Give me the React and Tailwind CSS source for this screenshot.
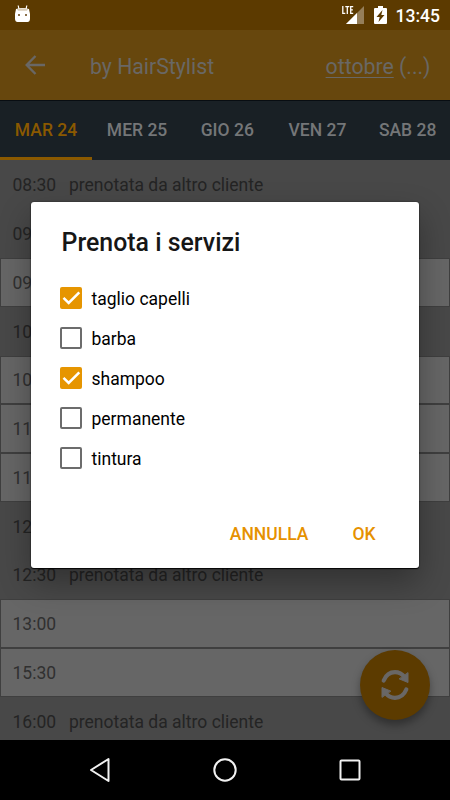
const days = ['MAR 24', 'MER 25', 'GIO 26', 'VEN 27', 'SAB 28'];

const slots = [
  { time: '08:30', taken: true },
  { time: '09:00', taken: true },
  { time: '09:30', taken: false },
  { time: '10:00', taken: true },
  { time: '10:30', taken: false },
  { time: '11:00', taken: false },
  { time: '11:30', taken: false },
  { time: '12:00', taken: true },
  { time: '12:30', taken: true },
  { time: '13:00', taken: false },
  { time: '15:30', taken: false },
  { time: '16:00', taken: true },
];

const services = [
  { name: 'taglio capelli', checked: true },
  { name: 'barba', checked: false },
  { name: 'shampoo', checked: true },
  { name: 'permanente', checked: false },
  { name: 'tintura', checked: false },
];

function StatusBar() {
  return (
    <div className="flex h-[30px] shrink-0 items-center bg-[#5c3a00] pl-[14px] pr-[10px] text-white">
      <svg width="17" height="20" viewBox="0 0 17 20" fill="currentColor">
        <path d="M4.200 .5l.8 4M12.800 .5l-.8 4" stroke="currentColor" strokeWidth="1.200" />
        <path d="M2 4Q8.500 2 15 4L16 9v5q-.2 3-2.500 3h-10Q1.200 17 1 14V9z" />
        <path d="M3 4Q8.500 2.800 14 4L13 5.800H4z" fill="#d8cdb8" />
        <path d="M4 9h2v2H4zM11 9h2v2h-2z" fill="#8b704b" />
      </svg>
      <div className="ml-auto flex items-center">
        <svg width="24" height="20" viewBox="0 0 24 20" fill="currentColor">
          <path d="M23 1v18H5z" opacity=".35" />
          <path d="M16 8v11H5z" />
          <path d="M1.800 1v7.400H4.300M4.300 1.600h4M6.300 1.600V9M12.200 1.600H9.700V8.400h2.500M9.700 4.900h2.200" fill="none" stroke="currentColor" strokeWidth="1.300" />
        </svg>
        <svg className="ml-[9px]" width="13" height="20" viewBox="0 0 13 20">
          <path d="M4 1h5v2h3q1 0 1 1v14q0 1-1 1H1q-1 0-1-1V4q0-1 1-1h3z" fill="currentColor" />
          <path d="M8.500 5L2.500 12h3.200l-1.200 5 6-7H7.300z" fill="#5c3a00" />
        </svg>
        <span className="ml-[9px] pt-px text-[17.5px] font-medium leading-[30px]">13:45</span>
      </div>
    </div>
  );
}

function Header() {
  return (
    <header className="flex h-[70px] shrink-0 items-center bg-[#67470d] pl-[25px] pr-[19.5px] pt-[3px] text-[21.25px] text-[#696765]">
      <svg className="-mt-[3px]" width="21" height="20" viewBox="0 0 21 20" fill="none" stroke="currentColor" strokeWidth="2.400">
        <path d="M20 10H2M10.500 1L1.700 10l8.800 9" />
      </svg>
      <span className="ml-[44px]">by HairStylist</span>
      <span className="ml-auto whitespace-pre">
        <span className="underline decoration-1 underline-offset-[3px] [text-decoration-skip-ink:none]">ottobre</span> (...)
      </span>
    </header>
  );
}

function DayTabs() {
  return (
    <nav className="flex h-[60px] shrink-0 overflow-hidden border-t border-[#080d12] bg-[#192025] text-[17.5px] font-medium text-[#747678]">
      {days.map((day, i) => (
        <div
          key={day}
          className={`flex shrink-0 items-center justify-center whitespace-nowrap border-b-[3px] pt-[2px] ${
            i === 0 ? 'w-[92px] border-[#8a5900] text-[#8a5900]' : 'w-[90.2px] border-transparent'
          }`}
        >
          {day}
        </div>
      ))}
    </nav>
  );
}

function Slot({ time, taken }) {
  return (
    <div
      className={`flex h-[48.75px] shrink-0 items-center border pl-[11.5px] pt-px text-[17.5px] ${
        taken ? 'border-transparent text-[#242424]' : 'border-[#3f3f3f] bg-[#666666] text-[#303030]'
      }`}
    >
      <span className="w-[56.5px]">{time}</span>
      {taken && <span>prenotata da altro cliente</span>}
    </div>
  );
}

function ServiceDialog() {
  return (
    <div className="absolute left-[31px] top-[201.5px] flex h-[366.5px] w-[387.5px] flex-col rounded-[3px] bg-white px-[30.5px] pt-[24.5px] text-black shadow-[0_1px_1px_rgba(0,0,0,0.9),0_0_2px_rgba(0,0,0,0.5),0_14px_32px_rgba(0,0,0,0.32)]">
      <h1 className="text-[24.9px] font-medium leading-[34px] text-[#161616]">Prenota i servizi</h1>
      <div className="-ml-[1.5px] mt-[18px]">
        {services.map(({ name, checked }) => (
          <div key={name} className="flex h-[40px] items-center text-[17.5px]">
            {checked ? (
              <span className="size-[22px] rounded-[2px] bg-[#e69500] text-white">
                <svg width="22" height="22" viewBox="0 0 22 22" fill="none" stroke="currentColor" strokeWidth="2.500">
                  <path d="M3.500 10.800l5.200 5.200L19.300 5.300" />
                </svg>
              </span>
            ) : (
              <span className="size-[22px] rounded-[2px] border-2 border-[#6c6c6c]" />
            )}
            <span className="ml-[9.500px] pt-[2px]">{name}</span>
          </div>
        ))}
      </div>
      <div className="mt-[42px] flex justify-end gap-[44px] pr-[12.5px] text-[17.5px] font-medium leading-[28px] text-[#e69100]">
        <button>ANNULLA</button>
        <button>OK</button>
      </div>
    </div>
  );
}

function RefreshButton() {
  return (
    <div className="absolute left-[360px] top-[650px] flex size-[70px] items-center justify-center rounded-full bg-[#5c3b00] text-[#696765] shadow-[0_5px_9px_rgba(0,0,0,0.35)]">
      <svg width="30" height="32" viewBox="0 0 30 32" fill="none" stroke="currentColor" strokeWidth="4.200" strokeLinecap="round">
        <path d="M3.700 11.500C6 6 10 3.200 15 3.200c4 0 7 1.600 9.500 4.800" />
        <path d="M26.300 20.500C24 26 20 28.800 15 28.800c-4 0-7-1.600-9.500-4.800" />
        <path d="M28 4v9.500L19.500 10zM2 28v-9.500L10.500 22z" fill="currentColor" strokeWidth="1" strokeLinejoin="round" />
      </svg>
    </div>
  );
}

function NavBar() {
  return (
    <div className="flex h-[60px] shrink-0 items-center justify-center gap-[100px] bg-black pr-px text-[#f2f2f2]">
      <svg width="25" height="26" viewBox="0 0 25 26" fill="none" stroke="currentColor" strokeWidth="2" strokeLinejoin="round">
        <path d="M21.500 2v22L4 13z" />
      </svg>
      <svg width="25" height="26" viewBox="0 0 25 26" fill="none" stroke="currentColor" strokeWidth="2">
        <circle cx="13" cy="13" r="10.700" />
      </svg>
      <svg width="25" height="26" viewBox="0 0 25 26" fill="none" stroke="currentColor" strokeWidth="2">
        <rect x="3.500" y="3.500" width="19" height="19" rx="1" />
      </svg>
    </div>
  );
}

export default function App() {
  return (
    <div className="relative flex h-[800px] w-[450px] flex-col overflow-hidden bg-[#484848] font-[Roboto,sans-serif]">
      <StatusBar />
      <Header />
      <DayTabs />
      <main className="flex min-h-0 flex-1 flex-col overflow-hidden pt-[0.5px]">
        {slots.map((slot) => (
          <Slot key={slot.time} {...slot} />
        ))}
      </main>
      <NavBar />
      <RefreshButton />
      <ServiceDialog />
    </div>
  );
}
